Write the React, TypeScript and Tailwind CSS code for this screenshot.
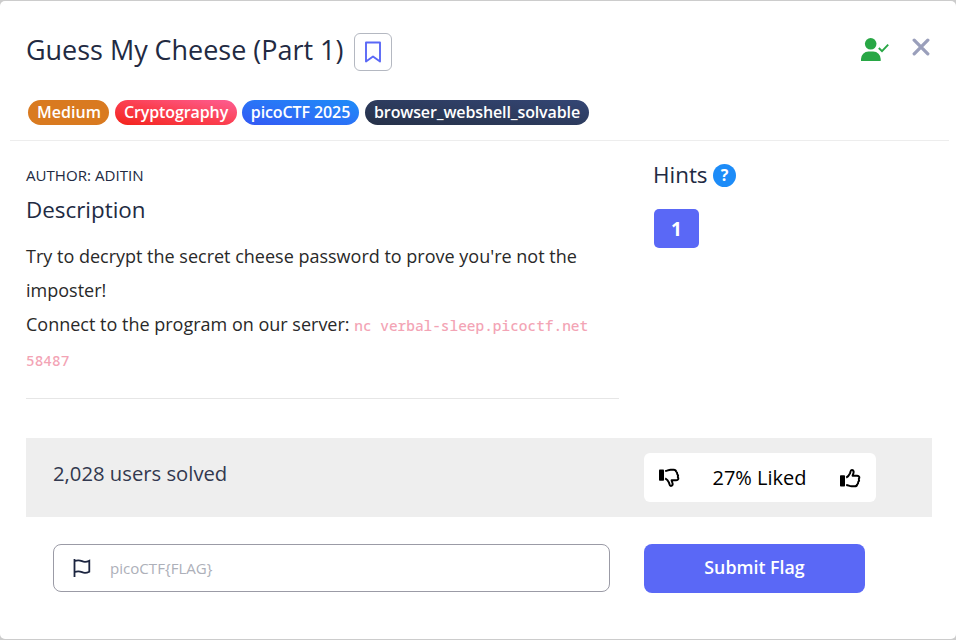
import React from "react";

const tags = [
  { label: "Medium", cls: "w-[81px] bg-[#d97a20] pl-[1px]" },
  { label: "Cryptography", cls: "w-[122px] bg-gradient-to-tr from-[#f32013] via-[#fb3f50] to-[#fd5d93] tracking-[-0.1px]" },
  { label: "picoCTF 2025", cls: "-ml-[1px] w-[117px] bg-gradient-to-tr from-[#3358f4] to-[#1d8cf8] tracking-[-0.1px]" },
  { label: "browser_webshell_solvable", cls: "w-[224px] bg-gradient-to-tr from-[#263148] to-[#344675] tracking-[-0.12px]" },
];

function Thumb({ down = false }: { down?: boolean }) {
  return (
    <svg width="22" height="20" viewBox="0 0 22 20" className={down ? "-scale-y-100" : ""} fill="none">
      <rect x="1" y="7.2" width="5" height="11.3" rx="0.8" fill="#000" />
      <path
        d="M7.2 9.6C9.3 8.5 10.3 7 11 5.4C11.5 4 11.4 2 12.8 2C14.4 2 15 3.5 14.5 5C14.2 6 13.8 6.9 13.6 7.8H18.1C20.4 7.9 20.9 9.7 19.8 10.9C20.4 12.2 20 13.4 19.2 14.1C19.3 15.3 18.9 16 18.1 16.5C17.9 17.8 17.2 18.3 15.7 18.3H12.6C10.5 18.3 9.5 17.2 7.2 16.9"
        stroke="#000" strokeWidth="2" strokeLinejoin="round"
      />
    </svg>
  );
}

export default function App() {
  return (
    <div className="h-[640px] w-[956px] overflow-hidden bg-[#cccccc] pt-[1px] pb-[1px] font-['Open_Sans',sans-serif] text-[#222a42]">
      <div className="flex h-[638px] flex-col rounded-[5px] bg-white">
        <header className="mr-[7px] ml-[10px] flex h-[140px] flex-col border-b border-[#ededed] pr-[19px] pl-4">
          <div className="flex h-[99px] pt-8">
            <h1 className="w-[328px] pt-[1px] text-[26.95px] leading-[32px] whitespace-nowrap">Guess My Cheese (Part 1)</h1>
            <button className="flex size-[38px] items-center justify-center rounded-[6px] border border-[#b4b8c1]">
              <svg width="16" height="22" viewBox="0 0 16 22" fill="none" stroke="#5a68f6" strokeWidth="1.9" strokeLinejoin="round">
                <path d="M1 1.5h14v19l-7-5-7 5z" />
              </svg>
            </button>
            <div className="ml-auto flex items-start">
              <svg width="28" height="24" viewBox="0 0 28 24" className="mt-[4px] mr-[23px]">
                <circle cx="9.7" cy="6.8" r="5.8" fill="#28a745" />
                <path d="M0 24V22a7.5 7.5 0 0 1 7.5-7.5h4.7A7.5 7.5 0 0 1 19.7 22v2z" fill="#28a745" />
                <path d="m17.8 11 3.2 3.2 6.2-6.5" fill="none" stroke="#28a745" strokeWidth="1.9" />
              </svg>
              <svg width="18" height="18" viewBox="0 0 18 18" className="mt-[5px]" stroke="#9a9fbb" strokeWidth="3.3" strokeLinecap="round">
                <path d="m2.2 2.2 13.6 13.6M15.8 2.2 2.2 15.8" />
              </svg>
            </div>
          </div>
          <div className="ml-[2px] flex gap-[6px]">
            {tags.map((t) => (
              <span key={t.label} className={`flex h-[25px] items-center justify-center rounded-full pb-[1px] text-[16px] leading-6 font-semibold whitespace-nowrap text-white ${t.cls}`}>
                {t.label}
              </span>
            ))}
          </div>
        </header>

        <main className="flex h-[297px] pl-[26px]">
          <section className="h-[258px] w-[593px] border-b border-[#e6e6e6]">
            <p className="pt-[24px] text-[15.1px] leading-[20px]">AUTHOR: ADITIN</p>
            <h2 className="mt-[9px] text-[22.4px] leading-[32px]">Description</h2>
            <p className="mt-[13px] text-[18px] leading-[34px] whitespace-nowrap text-[#292929]">
              Try to decrypt the secret cheese password to prove you're not the
              <br />imposter!<br />
              Connect to the program on our server:{" "}
              <code className="font-['Noto_Sans_Mono','DejaVu_Sans_Mono',monospace] text-[14.45px] font-medium text-[#f3a4b5]">
                nc verbal-sleep.picoctf.net
                <br />
                <span className="relative -top-[1px]">58487</span>
              </code>
            </p>
          </section>
          <aside className="ml-[34px] pt-[19px]">
            <div className="flex h-[30px] items-center">
              <h2 className="w-[60px] text-[22.4px] leading-[30px]">Hints</h2>
              <span className="flex size-[23px] items-center justify-center rounded-full bg-[#1d8cf8] text-[16px] leading-none font-bold text-white">?</span>
            </div>
            <button className="mt-[19px] ml-[1px] flex h-[39px] w-[45px] items-center justify-center rounded-[5px] bg-[#5a68f6] pt-[2px] text-[19px] font-bold text-white">1</button>
          </aside>
        </main>

        <section className="mr-6 ml-[26px] flex h-[79px] bg-[#eeeeee] pl-[27px]">
          <p className="w-[591px] pt-[20px] text-[20.25px] leading-[30px] text-[#32384f]">2,028 users solved</p>
          <div className="mt-[15px] flex h-[49px] w-[232px] items-center justify-between rounded-[6px] bg-white pr-[15px] pl-[14px] text-black">
            <Thumb down />
            <span className="text-[20px]">27% Liked</span>
            <Thumb />
          </div>
        </section>

        <form className="mt-[27px] ml-[53px] flex">
          <div className="flex h-[48px] w-[557px] items-center rounded-[8px] border border-[#9b9ba6] pl-[19px]">
            <svg width="18" height="20" viewBox="0 0 18 20" fill="none" stroke="#1c2540" strokeWidth="1.8">
              <path d="M1.5 1v18M1.5 3.2c3-1.3 5.2-1 7.5 0s4.5.9 7.3-.5v11c-2.8 1.4-5 1.5-7.3.5s-4.5-1.3-7.5 0" />
            </svg>
            <input className="ml-[19px] w-[400px] bg-transparent text-[15.1px] outline-none placeholder:text-[#adb0b9]" placeholder="picoCTF{FLAG}" />
          </div>
          <button type="button" className="ml-[34px] h-[49px] w-[221px] rounded-[8px] bg-[#5a68f6] pb-[2px] text-[17.8px] font-semibold text-white">Submit Flag</button>
        </form>
      </div>
    </div>
  );
}
